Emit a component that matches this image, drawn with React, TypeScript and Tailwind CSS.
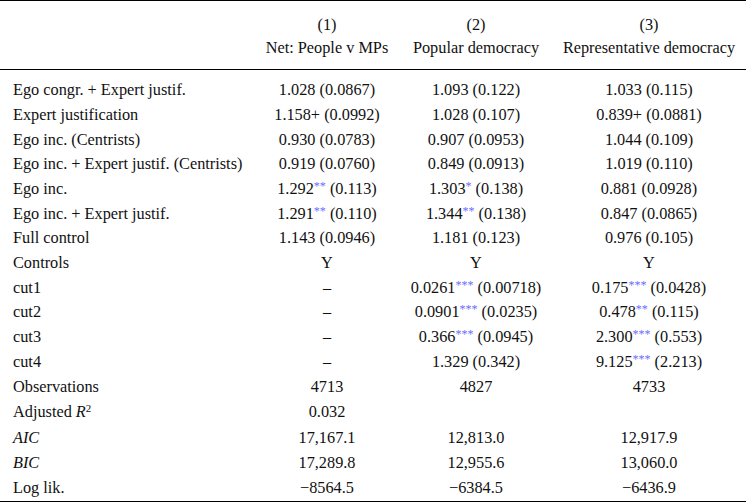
type Cell = { v: string; s?: string; se?: string }

const c = (v: string, s?: string, se?: string): Cell => ({ v, s, se })

const rows: { label: React.ReactNode; cells: (Cell | null)[] }[] = [
  { label: 'Ego congr. + Expert justif.', cells: [c('1.028', '', '(0.0867)'), c('1.093', '', '(0.122)'), c('1.033', '', '(0.115)')] },
  { label: 'Expert justification', cells: [c('1.158+', '', '(0.0992)'), c('1.028', '', '(0.107)'), c('0.839+', '', '(0.0881)')] },
  { label: 'Ego inc. (Centrists)', cells: [c('0.930', '', '(0.0783)'), c('0.907', '', '(0.0953)'), c('1.044', '', '(0.109)')] },
  { label: 'Ego inc. + Expert justif. (Centrists)', cells: [c('0.919', '', '(0.0760)'), c('0.849', '', '(0.0913)'), c('1.019', '', '(0.110)')] },
  { label: 'Ego inc.', cells: [c('1.292', '**', '(0.113)'), c('1.303', '*', '(0.138)'), c('0.881', '', '(0.0928)')] },
  { label: 'Ego inc. + Expert justif.', cells: [c('1.291', '**', '(0.110)'), c('1.344', '**', '(0.138)'), c('0.847', '', '(0.0865)')] },
  { label: 'Full control', cells: [c('1.143', '', '(0.0946)'), c('1.181', '', '(0.123)'), c('0.976', '', '(0.105)')] },
  { label: 'Controls', cells: [c('Y'), c('Y'), c('Y')] },
  { label: 'cut1', cells: [c('–'), c('0.0261', '***', '(0.00718)'), c('0.175', '***', '(0.0428)')] },
  { label: 'cut2', cells: [c('–'), c('0.0901', '***', '(0.0235)'), c('0.478', '**', '(0.115)')] },
  { label: 'cut3', cells: [c('–'), c('0.366', '***', '(0.0945)'), c('2.300', '***', '(0.553)')] },
  { label: 'cut4', cells: [c('–'), c('1.329', '', '(0.342)'), c('9.125', '***', '(2.213)')] },
]

const stats: { label: React.ReactNode; cells: string[] }[] = [
  { label: 'Observations', cells: ['4713', '4827', '4733'] },
  {
    label: (
      <span>
        Adjusted <i>R</i>
        <sup className="text-[11px] leading-none">2</sup>
      </span>
    ),
    cells: ['0.032', '', ''],
  },
  { label: <i>AIC</i>, cells: ['17,167.1', '12,813.0', '12,917.9'] },
  { label: <i>BIC</i>, cells: ['17,289.8', '12,955.6', '13,060.0'] },
  { label: 'Log lik.', cells: ['−8564.5', '−6384.5', '−6436.9'] },
]

const grid = 'grid grid-cols-[254px_146px_152px_194px] items-center'

function Value({ cell }: { cell: Cell | null }) {
  if (!cell) return <div />
  return (
    <div className="text-center whitespace-nowrap">
      {cell.v}
      {cell.s ? <sup className="text-[12px] leading-none text-[#6b6bff] relative -top-[4px]">{cell.s}</sup> : null}
      {cell.se ? ' ' + cell.se : ''}
    </div>
  )
}

export default function App() {
  return (
    <div
      className="w-[746px] h-[504px] bg-white text-[#111] text-[16.3px] leading-none"
      style={{ fontFamily: '"Liberation Serif", "Times New Roman", serif' }}
    >
      <div className="border-t border-black" />
      <div className={`${grid} h-[68px]`}>
        <div />
        {[
          ['(1)', 'Net: People v MPs'],
          ['(2)', 'Popular democracy'],
          ['(3)', 'Representative democracy'],
        ].map(([n, t]) => (
          <div key={n} className="flex flex-col items-center gap-[6px] pt-[3px] whitespace-nowrap">
            <div>{n}</div>
            <div>{t}</div>
          </div>
        ))}
      </div>
      <div className="border-t border-black" />
      <div className="pt-[8px]">
        {rows.map((r, i) => (
          <div key={i} className={`${grid} h-[24.7px]`}>
            <div className="pl-[13px] whitespace-nowrap">{r.label}</div>
            {r.cells.map((cell, j) => (
              <Value key={j} cell={cell} />
            ))}
          </div>
        ))}
        {stats.map((r, i) => (
          <div key={i} className={`${grid} h-[25.4px]`}>
            <div className="pl-[13px] whitespace-nowrap">{r.label}</div>
            {r.cells.map((v, j) => (
              <div key={j} className="text-center">
                {v}
              </div>
            ))}
          </div>
        ))}
      </div>
      <div className="border-t border-black" />
    </div>
  )
}
